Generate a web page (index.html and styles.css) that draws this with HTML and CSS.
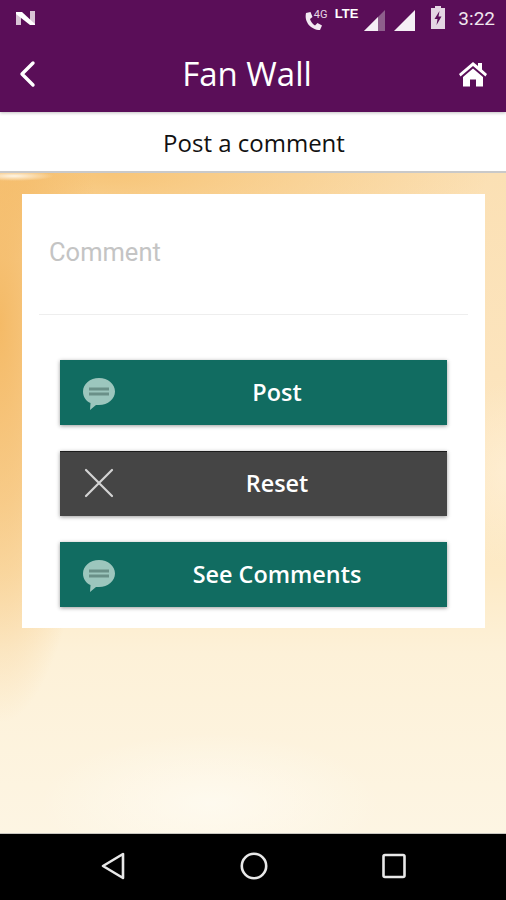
FILE: index.html
```html
<!DOCTYPE html>
<html lang="en">
<head>
    <meta charset="UTF-8">
    <meta name="viewport" content="width=device-width, initial-scale=1.0">
    <title>Fan Wall</title>
    <link rel="stylesheet" href="styles.css">
</head>
<body>

<div class="screen">
    <header class="app-header">
        <div class="status-bar">
            <svg class="n-logo" width="22" height="20" viewBox="0 0 22 20">
                <path d="M1 4 L6 4 L6 17 L1 17 Z" fill="#d9c3d6"/>
                <path d="M15 3 L20 3 L20 16 L15 16 Z" fill="#d9c3d6"/>
                <path d="M1 4 L7 4 L20 16 L20 17 L15 17 L1 6 Z" fill="#fff"/>
            </svg>
            <div class="status-right">
                <svg class="phone" width="20" height="24" viewBox="0 0 20 24">
                    <path d="M2 6 C0 15 7 23 16 23 L18 18.5 L13.5 16 L11 18.5 C8.5 17 6.5 14 6 12 L8.5 10 L6.5 5 Z" fill="#f2e9f1"/>
                </svg>
                <span class="net-small">4G</span>
                <span class="net-lte">LTE</span>
                <svg class="signal-one" width="21" height="21" viewBox="0 0 21 21">
                    <path d="M0 21 L21 0 L21 21 Z" fill="#8e5f8c"/>
                    <path d="M0 21 L14 7 L14 21 Z" fill="#f5eff5"/>
                </svg>
                <svg class="signal-two" width="21" height="21" viewBox="0 0 21 21">
                    <path d="M0 21 L21 0 L21 21 Z" fill="#f5eff5"/>
                </svg>
                <svg class="battery" width="14" height="23" viewBox="0 0 14 23">
                    <path d="M4 0 H10 V2 H14 V23 H0 V2 H4 Z" fill="#e4d6e3"/>
                    <path d="M8.5 5 L3.5 13 H6.5 L5.5 19 L10.5 10.5 H7.5 Z" fill="#5a0e58"/>
                </svg>
                <span class="clock">3:22</span>
            </div>
        </div>
        <div class="toolbar">
            <svg class="back-icon" width="18" height="28" viewBox="0 0 18 28">
                <path d="M15 3 L4 14 L15 25" fill="none" stroke="#fff" stroke-width="3.4" stroke-linecap="round" stroke-linejoin="round"/>
            </svg>
            <h1>Fan Wall</h1>
            <svg class="home-icon" width="30" height="26" viewBox="0 0 30 26">
                <path d="M1 13 L15 1 L20 5 V2 H24 V8.5 L29 13 L27.5 15.5 L15 5 L2.5 15.5 Z" fill="#fff"/>
                <path d="M15 7.5 L25 16 V25.5 H18 V18.5 H12 V25.5 H5 V16 Z" fill="#fff"/>
            </svg>
        </div>
    </header>

    <div class="sub-header">Post a comment</div>

    <main class="content">
        <div class="card">
            <div class="comment-field">
                <input type="text" placeholder="Comment">
            </div>
            <div class="button-list">
                <button class="btn btn-green">
                    <svg class="btn-icon" width="34" height="34" viewBox="0 0 34 34">
                        <path d="M17 1 C26 1 33 7 33 14.5 C33 22 26 28 17 28 L14 28 L8 33 L8.5 26 C4 24 1 20 1 14.5 C1 7 8 1 17 1 Z" fill="#9cc6bd"/>
                        <path d="M7 10.500 H27 V13.500 H7 Z M7 15.500 H27 V18.500 H7 Z" fill="#6a9088"/>
                    </svg>
                    <span>Post</span>
                </button>
                <button class="btn btn-dark">
                    <svg class="btn-icon" width="34" height="34" viewBox="0 0 34 34">
                        <path d="M4 4 L30 30 M30 4 L4 30" stroke="#d4d4d4" stroke-width="2.2" stroke-linecap="round"/>
                    </svg>
                    <span>Reset</span>
                </button>
                <button class="btn btn-green">
                    <svg class="btn-icon" width="34" height="34" viewBox="0 0 34 34">
                        <path d="M17 1 C26 1 33 7 33 14.5 C33 22 26 28 17 28 L14 28 L8 33 L8.5 26 C4 24 1 20 1 14.5 C1 7 8 1 17 1 Z" fill="#9cc6bd"/>
                        <path d="M7 10.500 H27 V13.500 H7 Z M7 15.500 H27 V18.500 H7 Z" fill="#6a9088"/>
                    </svg>
                    <span>See Comments</span>
                </button>
            </div>
        </div>
    </main>

    <nav class="nav-bar">
        <svg width="26" height="28" viewBox="0 0 26 28">
            <path d="M23 2 V26 L3 14 Z" fill="none" stroke="#e8e8e8" stroke-width="2.6" stroke-linejoin="round"/>
        </svg>
        <svg width="28" height="28" viewBox="0 0 28 28">
            <circle cx="14" cy="14" r="12.2" fill="none" stroke="#e8e8e8" stroke-width="2.6"/>
        </svg>
        <svg width="24" height="26" viewBox="0 0 24 26">
            <rect x="1.500" y="2" width="21" height="22" rx="1.500" fill="none" stroke="#e8e8e8" stroke-width="2.6"/>
        </svg>
    </nav>
</div>

</body>
</html>
```

FILE: styles.css
```css
body {
    margin: 0;
    font-family: "Open Sans", sans-serif;
}
.screen {
    width: 506px;
    height: 900px;
    display: flex;
    flex-direction: column;
    overflow: hidden;
}
.app-header {
    height: 112px;
    background: #5a0e58;
    color: white;
    flex: none;
    position: relative;
    box-shadow: 0 1px 3px rgba(0, 0, 0, 0.25);
}
.status-bar {
    height: 36px;
    display: flex;
    justify-content: space-between;
    align-items: center;
    padding: 0 11px 0 15px;
}
.status-right {
    display: flex;
    align-items: center;
    height: 36px;
}
.phone {
    margin-top: 2px;
}
.net-small {
    font-family: "Roboto", sans-serif;
    font-size: 11px;
    margin: -7px 0 0 -10px;
    width: 15px;
    color: #e6d8e5;
}
.net-lte {
    font-family: "Liberation Sans", sans-serif;
    font-size: 13px;
    font-weight: bold;
    margin: -9px 0 0 6px;
}
.signal-one {
    margin: 4px 0 0 6px;
}
.signal-two {
    margin: 4px 0 0 9px;
}
.battery {
    margin: -2px 0 0 16px;
}
.clock {
    font-family: "Roboto", sans-serif;
    font-size: 19px;
    margin-left: 13px;
    color: #f0e6ef;
}
.toolbar {
    height: 76px;
    display: flex;
    align-items: center;
    justify-content: space-between;
    padding: 0 18px;
    box-sizing: border-box;
}
.toolbar h1 {
    margin: 0;
    font-size: 33px;
    font-weight: 400;
    line-height: 40px;
}
.sub-header {
    height: 61px;
    box-sizing: border-box;
    background: white;
    border-bottom: 2px solid #c9c9c9;
    padding-left: 2px;
    text-align: center;
    font-size: 24px;
    line-height: 62px;
    color: #111;
    flex: none;
}
.content {
    flex: 1;
    padding: 21px 21px 0 22px;
    background:
        radial-gradient(ellipse 40px 5px at 14px 3px, rgba(255, 248, 235, 0.95), rgba(255, 248, 235, 0)),
        radial-gradient(ellipse 100px 400px at 0 150px, rgba(244, 184, 98, 0.95), rgba(244, 184, 98, 0.6) 45%, rgba(244, 184, 98, 0)),
        radial-gradient(ellipse 380px 90px at 110px 0, rgba(246, 190, 105, 0.8), rgba(246, 190, 105, 0)),
        radial-gradient(ellipse 60px 90px at 506px 300px, rgba(255, 240, 215, 0.7), rgba(255, 240, 215, 0)),
        radial-gradient(ellipse 170px 70px at 210px 630px, rgba(255, 252, 244, 0.7), rgba(255, 252, 244, 0)),
        linear-gradient(to bottom, #fbe0b4 0, #fce4bd 200px, #fdeac6 400px, #fdf1d8 480px, #fdf5e3 660px);
    border-bottom: 1px solid #c8c6c0;
}
.card {
    background: white;
    height: 434px;
    padding: 0 17px;
    box-sizing: border-box;
}
.comment-field {
    height: 120px;
    border-bottom: 1px solid #eeeeee;
}
.comment-field input {
    width: 100%;
    box-sizing: border-box;
    border: none;
    outline: none;
    padding: 43px 10px 0;
    font-family: "Roboto", sans-serif;
    font-size: 25.5px;
    color: #333;
}
.comment-field input::placeholder {
    color: #c4c4c4;
}
.button-list {
    display: flex;
    flex-direction: column;
    gap: 26px;
    padding: 45px 21px 0;
}
.btn {
    height: 65px;
    border: none;
    display: flex;
    align-items: center;
    padding: 0 0 2px;
    color: white;
    font-family: "Open Sans", sans-serif;
    font-size: 23.4px;
    font-weight: 600;
    box-shadow: 0 1px 4px rgba(0, 0, 0, 0.4);
    position: relative;
}
.btn span {
    flex: 1;
    text-align: center;
    margin-left: 47px;
}
.btn-icon {
    left: 22px;
    top: 17px;
    position: absolute;
}
.btn-green {
    background: #116c61;
}
.btn-dark {
    background: #454545;
    border-top: 1px solid #1c1c1c;
}
.btn-dark .btn-icon {
    top: 14px;
}
.nav-bar {
    height: 66px;
    background: black;
    display: flex;
    align-items: center;
    flex: none;
    gap: 114px;
    padding: 0 0 2px 100px;
    box-sizing: border-box;
}
```
